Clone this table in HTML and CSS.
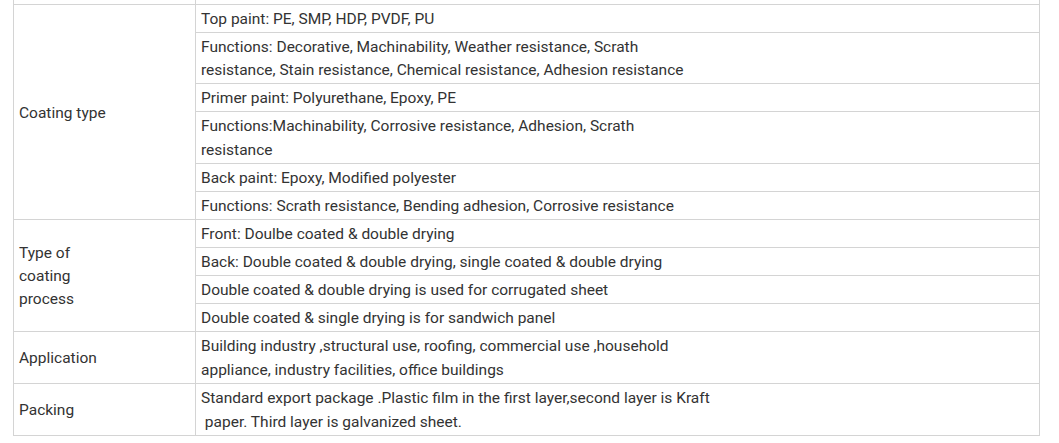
FILE: index.html
```html
<!DOCTYPE html>
<html>
<head>
<meta charset="utf-8">
<link rel="stylesheet" href="styles.css">
</head>
<body>
<table class="spec">
  <colgroup><col class="c-label"><col class="c-value"></colgroup>
  <tr><td>&nbsp;</td><td>&nbsp;</td></tr>
  <tr><td rowspan="6">Coating type</td><td>Top paint: PE, SMP, HDP, PVDF, PU</td></tr>
  <tr><td>Functions: Decorative, Machinability, Weather resistance, Scrath<br>resistance, Stain resistance, Chemical resistance, Adhesion resistance</td></tr>
  <tr><td>Primer paint: Polyurethane, Epoxy, PE</td></tr>
  <tr><td class="two">Functions:Machinability, Corrosive resistance, Adhesion, Scrath<br>resistance</td></tr>
  <tr><td>Back paint: Epoxy, Modified polyester</td></tr>
  <tr><td>Functions: Scrath resistance, Bending adhesion, Corrosive resistance</td></tr>
  <tr><td rowspan="4">Type of<br>coating<br>process</td><td>Front: Doulbe coated &amp; double drying</td></tr>
  <tr><td>Back: Double coated &amp; double drying, single coated &amp; double drying</td></tr>
  <tr><td>Double coated &amp; double drying is used for corrugated sheet</td></tr>
  <tr><td>Double coated &amp; single drying is for sandwich panel</td></tr>
  <tr><td>Application</td><td class="two">Building industry ,structural use, roofing, commercial use ,household<br>appliance, industry facilities, office buildings</td></tr>
  <tr><td>Packing</td><td class="two">Standard export package .Plastic film in the first layer,second layer is Kraft<br>&nbsp;paper. Third layer is galvanized sheet.</td></tr>
</table>
</body>
</html>
```

FILE: styles.css
```css
html, body {
  margin: 0;
  padding: 0;
  background: #ffffff;
}
body {
  font-family: Roboto, "Liberation Sans", sans-serif;
  font-size: 15.5px;
  color: #333333;
}
.spec {
  border-collapse: collapse;
  width: 1027px;
  margin: -24px 0 0 13px;
  table-layout: fixed;
}
.c-label { width: 182px; }
.spec td {
  border: 1px solid #d4d4d4;
  padding: 3px 5px 1px;
  line-height: 23px;
  vertical-align: middle;
  text-align: left;
}
.spec td.two {
  line-height: 23.5px;
}
```
